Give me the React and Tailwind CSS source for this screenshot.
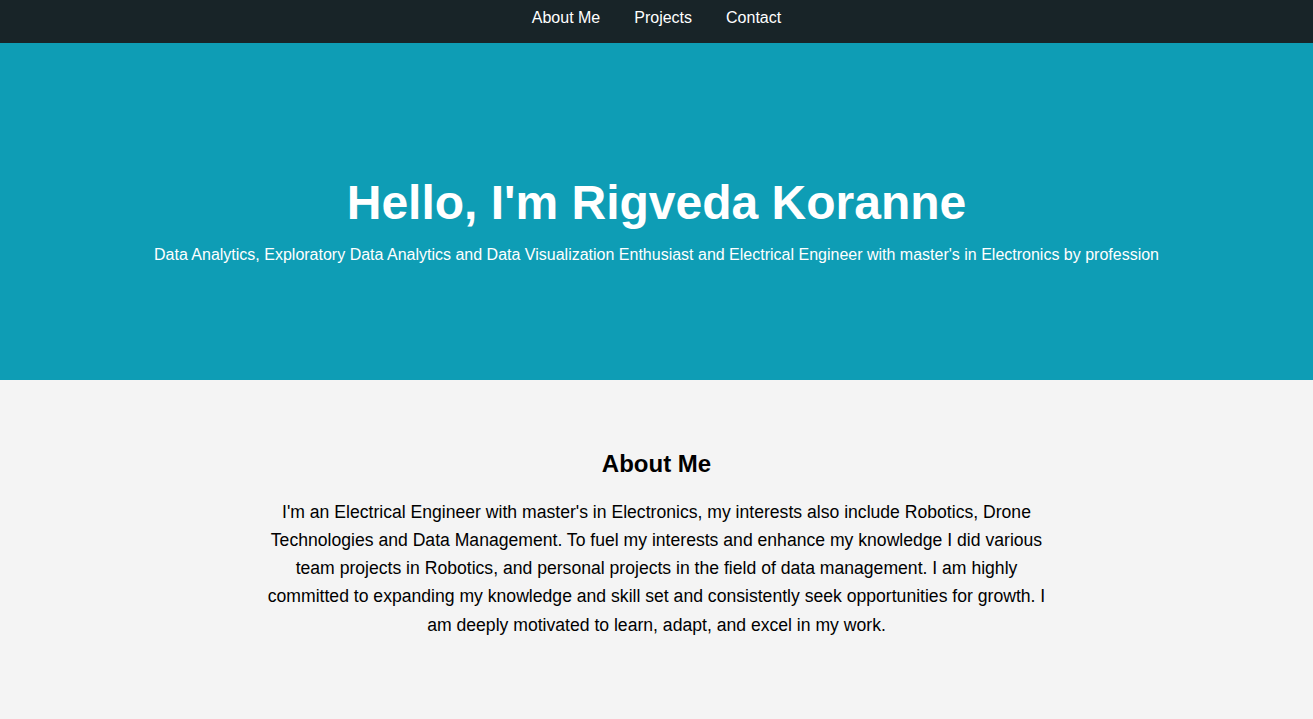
export default function App() {
  return (
    <div className="min-h-[719px] bg-[#f4f4f4] text-black" style={{ fontFamily: '"Liberation Sans", Arial, sans-serif' }}>
      <nav className="h-[43px] bg-[#182428] flex justify-center pt-[9px]">
        <ul className="flex gap-[34px] text-[16px] leading-[18px] text-white">
          <li>About Me</li>
          <li>Projects</li>
          <li>Contact</li>
        </ul>
      </nav>
      <header className="h-[337px] bg-[#0e9db5] text-white flex flex-col items-center pt-[132px]">
        <h1 className="text-[48px] font-bold leading-[55px]">Hello, I'm Rigveda Koranne</h1>
        <p className="mt-[16px] text-[16px] leading-[18px]">
          Data Analytics, Exploratory Data Analytics and Data Visualization Enthusiast and Electrical Engineer with master's in Electronics by profession
        </p>
      </header>
      <section className="pt-[70px] pb-[60px] flex flex-col items-center">
        <h2 className="text-[24px] font-bold leading-[28px]">About Me</h2>
        <p className="mt-[20px] max-w-[800px] text-center text-[17.6px] leading-[28.16px]">
          I'm an Electrical Engineer with master's in Electronics, my interests also include Robotics, Drone Technologies and Data Management. To fuel my interests and enhance my knowledge I did various team projects in Robotics, and personal projects in the field of data management. I am highly committed to expanding my knowledge and skill set and consistently seek opportunities for growth. I am deeply motivated to learn, adapt, and excel in my work.
        </p>
      </section>
    </div>
  );
}
